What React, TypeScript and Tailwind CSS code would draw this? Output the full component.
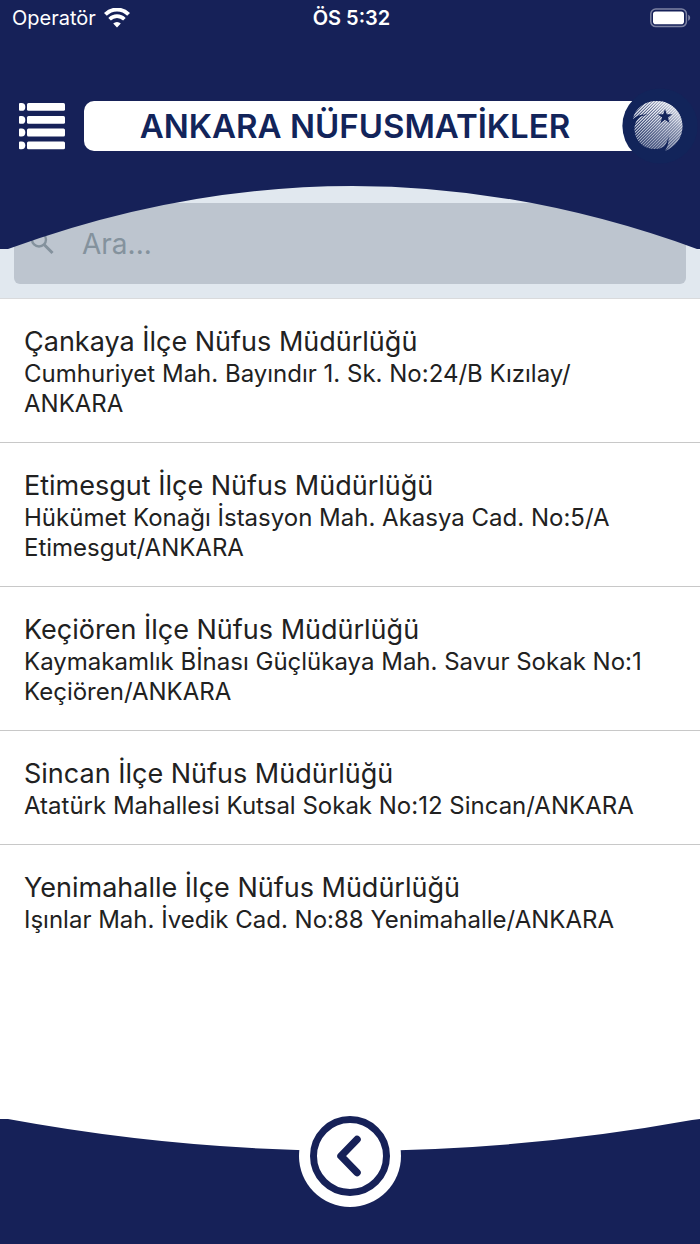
import { useState } from "react";

interface Office {
	name: string;
	address: string;
}

const offices: Office[] = [
	{
		name: "Çankaya İlçe Nüfus Müdürlüğü",
		address: "Cumhuriyet Mah. Bayındır 1. Sk. No:24/B Kızılay/\nANKARA",
	},
	{
		name: "Etimesgut İlçe Nüfus Müdürlüğü",
		address:
			"Hükümet Konağı İstasyon Mah. Akasya Cad. No:5/A\nEtimesgut/ANKARA",
	},
	{
		name: "Keçiören İlçe Nüfus Müdürlüğü",
		address:
			"Kaymakamlık Bİnası Güçlükaya Mah. Savur Sokak No:1\nKeçiören/ANKARA",
	},
	{
		name: "Sincan İlçe Nüfus Müdürlüğü",
		address: "Atatürk Mahallesi Kutsal Sokak No:12 Sincan/ANKARA",
	},
	{
		name: "Yenimahalle İlçe Nüfus Müdürlüğü",
		address: "Işınlar Mah. İvedik Cad. No:88 Yenimahalle/ANKARA",
	},
];

const WifiIcon = () => (
	<svg width="26" height="20" viewBox="0 0 26 20" fill="none" aria-hidden="true">
		<path d="M1.4 6.400a16.400 16.400 0 0 1 23.200 0" stroke="#fff" strokeWidth="4" />
		<path d="M5.600 11.200a10.400 10.400 0 0 1 14.800 0" stroke="#fff" strokeWidth="3.600" />
		<path d="M13 19.400l-3.800-3.900a5.400 5.400 0 0 1 7.600 0z" fill="#fff" />
	</svg>
);

const BatteryIcon = () => (
	<svg width="41" height="20" viewBox="0 0 41 20" fill="none" aria-hidden="true">
		<rect x="0.8" y="1" width="35.6" height="17.6" rx="5" stroke="#7d83a3" strokeWidth="1.5" />
		<rect x="3" y="3.4" width="31" height="12.8" rx="2.8" fill="#fff" />
		<path d="M38.2 6.8c2.6 1 2.6 5 0 6z" fill="#7d83a3" />
	</svg>
);

const StatusBar = () => (
	<div className="grid h-9 grid-cols-3 items-center pl-3 pr-[9px] text-[20px] leading-6">
		<div className="flex items-center gap-2">
			<span>Operatör</span>
			<WifiIcon />
		</div>
		<span className="text-center font-semibold">ÖS 5:32</span>
		<div className="flex justify-end">
			<BatteryIcon />
		</div>
	</div>
);

const MenuIcon = () => (
	<svg width="46" height="48" viewBox="0 0 46 48" fill="#fff" aria-hidden="true">
		{[1, 14, 26.6, 39.4].map((y) => (
			<g key={y} transform={`translate(0 ${y})`}>
				<path d="M1 0h1.600a3.700 3.900 0 0 1 0 7.800H1a1 1 0 0 1-1-1V1a1 1 0 0 1 1-1z" />
				<rect x="8" width="38" height="7.8" rx="1.5" />
			</g>
		))}
	</svg>
);

// hatched moon with the star cut out, on a disc that bites into the title bar
const Logo = () => (
	<svg width="76" height="76" viewBox="0 0 76 76" aria-hidden="true">
		<defs>
			<linearGradient id="moonFade" x1="0.85" y1="0.1" x2="0.3" y2="1">
				<stop offset="0" stopColor="#fff" stopOpacity="0.8" />
				<stop offset="0.3" stopColor="#fff" stopOpacity="0.35" />
				<stop offset="1" stopColor="#fff" stopOpacity="0" />
			</linearGradient>
			<linearGradient id="moonShade" x1="0.6" y1="0.3" x2="0.25" y2="1">
				<stop offset="0" stopColor="#12245a" stopOpacity="0" />
				<stop offset="1" stopColor="#12245a" stopOpacity="0.35" />
			</linearGradient>
			<pattern
				id="hatch"
				width="2.1"
				height="2.1"
				patternUnits="userSpaceOnUse"
				patternTransform="rotate(-45)"
			>
				<rect width="2.1" height="1.1" fill="#eef1f8" />
			</pattern>
			<path
				id="moon"
				d="M11 31C13 20 23 13 35 13C49 13 60.500 24 60.500 38C60.500 50 53 59 43 63C45.500 59 47 55 46.500 48C45.800 52 44.500 56 42 58.500C38 61 33 61.500 28 60.500C18 58 12.500 50 12.500 40C12.800 35 15 31 18 29C21 27.500 24 27 26.500 27C22 25.800 15 27 11 31Z"
			/>
		</defs>
		<circle cx="38" cy="38" r="37.600" fill="#12245a" />
		<use href="#moon" fill="url(#moonFade)" />
		<use href="#moon" fill="url(#hatch)" />
		<use href="#moon" fill="url(#moonShade)" />
		<path
			d="M43 21l1.800 5.300h5.500l-4.400 3.300 1.700 5.300-4.600-3.200-4.600 3.200 1.700-5.300-4.400-3.300h5.500z"
			fill="#12245a"
		/>
	</svg>
);

const Header = () => (
	<header className="bg-[#162158] pb-[22px] text-white">
		<StatusBar />
		<div className="mt-[52px] flex items-center pl-[19px] pr-0.5">
			<button type="button" aria-label="Menü">
				<MenuIcon />
			</button>
			<h1 className="ml-[19px] flex-1 rounded-l-[10px] bg-white pr-3.5 text-center text-[33px] font-semibold leading-[50px] text-[#12245a]">
				ANKARA NÜFUSMATİKLER
			</h1>
			<div className="-ml-[18px]">
				<Logo />
			</div>
		</div>
	</header>
);

interface SearchBoxProps {
	value: string;
	onChange: (value: string) => void;
}

const SearchBox = ({ value, onChange }: SearchBoxProps) => (
	<div className="relative border-b border-[#d9dadc] bg-[#e1e8ef] px-3.5 pb-3.5 pt-[17px]">
		<label className="flex h-[81px] items-center gap-7 rounded-md bg-[#bdc5cf] px-4 text-[#84929d]">
			<svg width="24" height="24" viewBox="0 0 24 24" fill="none" stroke="currentColor" aria-hidden="true">
				<circle cx="9" cy="7.500" r="7" strokeWidth="2.400" />
				<path d="M14 12.500l8.500 8.500" strokeWidth="3" />
			</svg>
			<input
				type="text"
				aria-label="Ara"
				placeholder="Ara..."
				value={value}
				onChange={(e) => onChange(e.target.value)}
				className="min-w-0 flex-1 bg-transparent text-[28px] leading-9 text-[#212121] outline-none placeholder:text-[#84929d]"
			/>
		</label>
		<svg
			className="pointer-events-none absolute inset-x-0 top-0 h-16 w-full"
			viewBox="0 0 700 64"
			preserveAspectRatio="none"
			aria-hidden="true"
		>
			<path d="M0 0H700V63H697Q352 -63 8 63H0Z" fill="#162158" />
		</svg>
	</div>
);

const OfficeItem = ({ office }: { office: Office }) => (
	<li className="border-b border-[#c8c8c8] px-6 pb-[23px] pt-[26px] last:border-b-0">
		<h2 className="text-[27px] leading-[34px]">{office.name}</h2>
		<p className="whitespace-pre-line text-[24px] leading-[30px]">
			{office.address}
		</p>
	</li>
);

const Footer = () => (
	<footer className="relative flex justify-center pb-[37px]">
		<svg
			className="absolute inset-x-0 bottom-0 h-[125px] w-full"
			viewBox="0 0 700 125"
			preserveAspectRatio="none"
			aria-hidden="true"
		>
			<path d="M0 0H8Q350 63 692 1L700 0V125H0Z" fill="#162158" />
		</svg>
		<button
			type="button"
			aria-label="Geri"
			className="relative flex size-[102px] items-center justify-center rounded-full bg-white"
		>
			<svg width="80" height="80" viewBox="0 0 80 80" fill="none" stroke="#162158" aria-hidden="true">
				<circle cx="40" cy="40" r="36.500" strokeWidth="7" />
				<path
					d="M47 23.500L31 40l16 16.500"
					strokeWidth="7.500"
					strokeLinecap="round"
					strokeLinejoin="round"
				/>
			</svg>
		</button>
	</footer>
);

export default function App() {
	const [query, setQuery] = useState("");

	const filtered = offices.filter((office) =>
		`${office.name} ${office.address}`
			.toLocaleLowerCase("tr")
			.includes(query.toLocaleLowerCase("tr"))
	);

	return (
		<div className="flex min-h-screen flex-col bg-white font-['Inter',sans-serif] text-[#212121]">
			<Header />
			<main className="flex-1">
				<SearchBox value={query} onChange={setQuery} />
				<ul>
					{filtered.map((office) => (
						<OfficeItem key={office.name} office={office} />
					))}
				</ul>
			</main>
			<Footer />
		</div>
	);
}
